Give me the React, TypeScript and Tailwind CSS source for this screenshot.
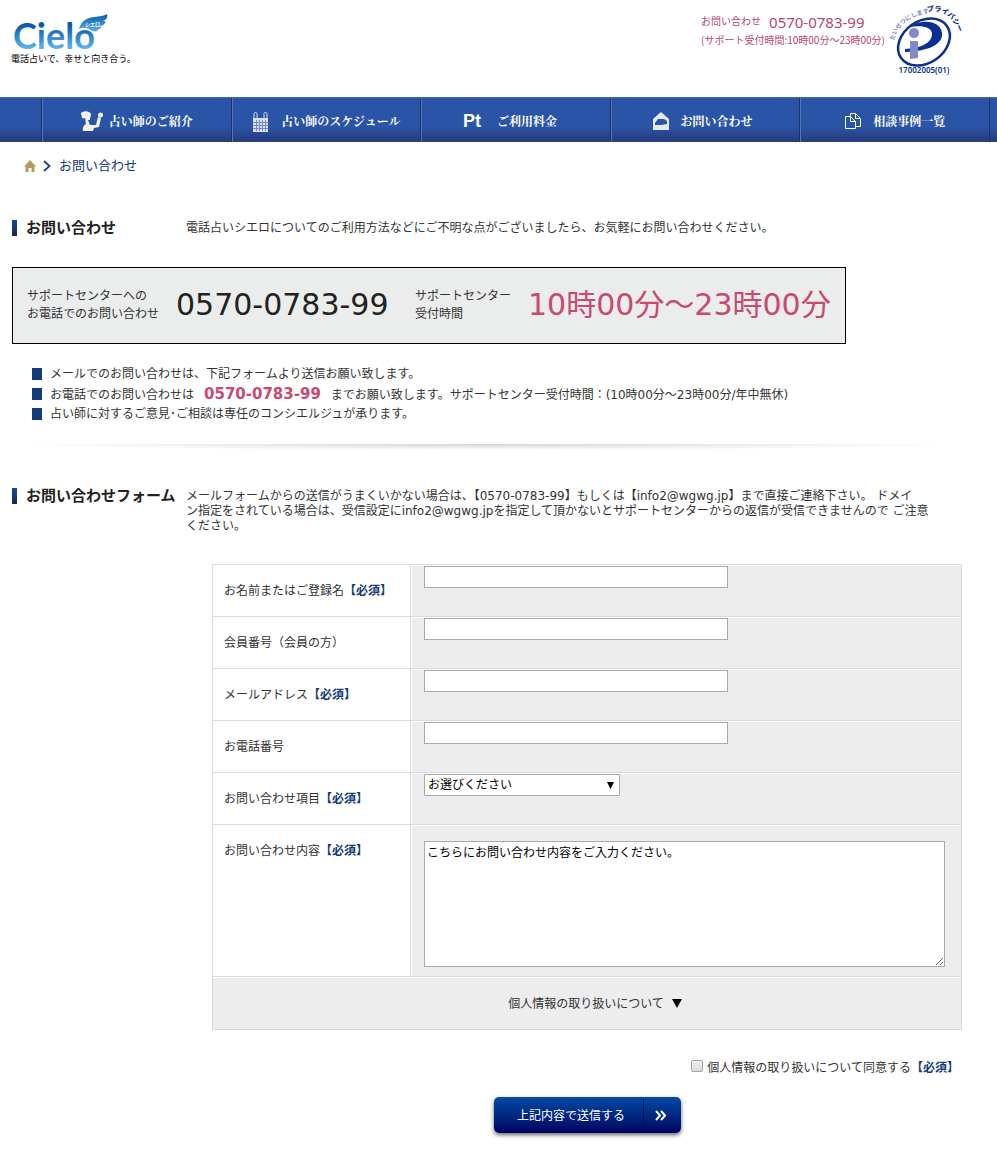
import React from 'react';

const navItems = [
  { label: '占い師のご紹介', icon: <PersonIcon />, gap: 'gap-1.5' },
  { label: '占い師のスケジュール', icon: <ScheduleIcon />, gap: 'gap-3' },
  { label: 'ご利用料金', icon: <PointIcon />, gap: 'gap-4 pr-3' },
  { label: 'お問い合わせ', icon: <MailIcon />, gap: 'gap-3 pr-1.5' },
  { label: '相談事例一覧', icon: <CasesIcon />, gap: 'gap-3' },
];

const textFields = [
  { id: 'name', label: 'お名前またはご登録名', type: 'text', required: true },
  { id: 'member', label: '会員番号（会員の方）', type: 'text', required: false },
  { id: 'email', label: 'メールアドレス', type: 'email', required: true },
  { id: 'tel', label: 'お電話番号', type: 'tel', required: false },
];

export default function App() {
  return (
    <div className="bg-white pb-4 font-['DejaVu_Sans','Noto_Sans_CJK_JP',sans-serif] text-xs text-[#333]">
      <Header />
      <GlobalNav />
      <main className="max-w-[962px] pl-3">
        <Breadcrumb />
        <ContactInfo />
        <ContactForm />
      </main>
    </div>
  );
}

function Header() {
  return (
    <header className="flex h-[97px] max-w-[962px] items-start justify-between pl-[11px]">
      <a href="#" className="block pt-2">
        <Logo />
        <p className="text-[9px] leading-3 text-black">電話占いで、幸せと向き合う。</p>
      </a>
      <div className="flex">
        <div className="pt-3 text-[10px] text-[#b8456b]">
          <p className="flex items-center gap-2 leading-5">
            <span>お問い合わせ</span>
            <span className="font-['Noto_Sans',sans-serif] text-[15px]">0570-0783-99</span>
          </p>
          <p className="font-['Noto_Sans_CJK_JP',sans-serif] leading-4">(サポート受付時間:10時00分〜23時00分)</p>
        </div>
        <PrivacyMark />
      </div>
    </header>
  );
}

function GlobalNav() {
  return (
    <nav className="h-[45px] border-t border-[#4768ab] bg-linear-to-b from-[#2a55a6] from-65% to-[#283f86] to-90% pr-[7px] pl-[41px]">
      <ul className="flex h-full border-r border-[#1c3364]">
        {navItems.map((item) => (
          <li key={item.label} className="flex-1 border-l border-[#1c3364]">
            <a
              href="#"
              className={`flex h-full items-center justify-center border-l border-[#5476b5] pt-0.5 font-['Noto_Serif_CJK_JP','Noto_Sans_CJK_JP',serif] font-bold whitespace-nowrap text-white ${item.gap}`}
            >
              {item.icon}
              {item.label}
            </a>
          </li>
        ))}
      </ul>
    </nav>
  );
}

function Breadcrumb() {
  return (
    <div className="flex h-12 items-center gap-1.5 pl-3">
      <a href="#" aria-label="ホーム">
        <svg width="12" height="12" viewBox="0 0 12 12">
          <path d="M6 0 12 6.5H10.5V12H7.5V8H4.5V12H1.5V6.5H0Z" fill="#b09d5e" />
        </svg>
      </a>
      <svg width="9" height="12" viewBox="0 0 9 12" fill="none" stroke="#1d3f94" strokeWidth="1.8">
        <path d="M2 1 7.5 6 2 11" />
      </svg>
      <span className="pl-0.5 text-[13px] text-[#143a78]">お問い合わせ</span>
    </div>
  );
}

function SectionHeading({ children }: { children: React.ReactNode }) {
  return (
    <h2 className="flex h-5 w-[174px] shrink-0 items-center gap-[9px] text-[15px] leading-5 font-bold whitespace-nowrap text-[#222]">
      <span className="h-4 w-[5px] shrink-0 bg-linear-to-b from-[#0a4ba5] to-[#1c2450]" />
      {children}
    </h2>
  );
}

function ContactInfo() {
  return (
    <section className="pt-7">
      <div className="flex items-center">
        <SectionHeading>お問い合わせ</SectionHeading>
        <p className="leading-5">
          電話占いシエロについてのご利用方法などにご不明な点がございましたら、お気軽にお問い合わせください。
        </p>
      </div>

      <div className="mt-[29px] flex h-[77px] max-w-[834px] items-center border border-black bg-[#ebedec] pb-0.5 pl-3.5 whitespace-nowrap">
        <p className="w-[149px] leading-[18px]">
          サポートセンターへの
          <br />
          お電話でのお問い合わせ
        </p>
        <p className="w-[239px] text-[30px] leading-10 text-[#222]">0570-0783-99</p>
        <p className="w-[113px] leading-[18px]">
          サポートセンター
          <br />
          受付時間
        </p>
        <p className="text-[30px] leading-10 text-[#c94a6f]">10時00分〜23時00分</p>
      </div>

      <ul className="mt-5 pl-5">
        <Bullet>メールでのお問い合わせは、下記フォームより送信お願い致します。</Bullet>
        <Bullet>
          お電話でのお問い合わせは
          <strong className="mx-2.5 text-[15px] text-[#c94a6f]">0570-0783-99</strong>
          までお願い致します。サポートセンター受付時間：(10時00分〜23時00分/年中無休)
        </Bullet>
        <Bullet>占い師に対するご意見･ご相談は専任のコンシエルジュが承ります。</Bullet>
      </ul>

      <div className="mt-5 h-1.5 bg-[radial-gradient(ellipse_50%_100%_at_50%_0%,#d4d4d4,#ffffff)]" />
    </section>
  );
}

function Bullet({ children }: { children: React.ReactNode }) {
  return (
    <li className="flex h-5 items-center gap-2 leading-5 whitespace-nowrap">
      <span className="h-3 w-2.5 bg-[#143a7b]" />
      <span>{children}</span>
    </li>
  );
}

function Required() {
  return <strong className="text-[#143a78]">【必須】</strong>;
}

function FormRow({ id, label, required, children }: { id: string; label: string; required: boolean; children: React.ReactNode }) {
  return (
    <div className="grid grid-cols-[198px_1fr] border-b border-[#dadada]">
      <label htmlFor={id} className="border-r border-[#dadada] pt-px pl-[11px] leading-[50px] whitespace-nowrap">
        {label}
        {required && <Required />}
      </label>
      <div className="mt-px ml-px bg-[#ededed] pl-3">{children}</div>
    </div>
  );
}

function ContactForm() {
  return (
    <section className="pt-9">
      <div className="flex items-start">
        <SectionHeading>お問い合わせフォーム</SectionHeading>
        <p className="pt-[3px] leading-[15px] whitespace-nowrap">
          メールフォームからの送信がうまくいかない場合は、【0570-0783-99】もしくは【info2@wgwg.jp】まで直接ご連絡下さい。 ドメイ
          <br />
          ン指定をされている場合は、受信設定にinfo2@wgwg.jpを指定して頂かないとサポートセンターからの返信が受信できませんので ご注意
          <br />
          ください。
        </p>
      </div>

      <form className="mt-[30px] ml-[200px]">
        <div className="border-x border-t border-[#dadada]">
          {textFields.map((field) => (
            <FormRow key={field.id} id={field.id} label={field.label} required={field.required}>
              <input
                id={field.id}
                type={field.type}
                className="block h-[22px] w-[304px] border border-[#a9a9a9] bg-white px-1"
              />
            </FormRow>
          ))}
          <FormRow id="topic" label="お問い合わせ項目" required>
            <div className="grid w-[196px] items-center">
              <select
                id="topic"
                className="col-start-1 row-start-1 h-[22px] appearance-none rounded-[1px] border border-[#a9a9a9] bg-white pl-[3px] text-black"
              >
                <option>お選びください</option>
              </select>
              <svg
                className="pointer-events-none col-start-1 row-start-1 mr-1.5 justify-self-end"
                width="7"
                height="7"
                viewBox="0 0 7 7"
              >
                <path d="M0 0H7L3.5 7Z" />
              </svg>
            </div>
          </FormRow>
          <FormRow id="message" label="お問い合わせ内容" required>
            <div className="pt-[15px] pr-4 pb-[9px]">
              <textarea
                id="message"
                defaultValue="こちらにお問い合わせ内容をご入力ください。"
                className="block h-[126px] w-full border border-[#a9a9a9] bg-white px-0.5 py-0.5 leading-[18px] text-black"
              />
            </div>
          </FormRow>
          <button
            type="button"
            className="mt-px flex h-[52px] w-full items-center justify-center gap-2 border-b border-[#dadada] bg-[#ededed] pl-4"
          >
            個人情報の取り扱いについて
            <svg width="10" height="9" viewBox="0 0 10 9">
              <path d="M0 0H10L5 9Z" />
            </svg>
          </button>
        </div>

        <div className="mt-7 flex items-center justify-end gap-1 pr-[3px] leading-5">
          <input
            id="agree"
            type="checkbox"
            className="mb-1 size-3 appearance-none rounded-[2px] border border-[#a5a5a5] bg-linear-to-b from-[#eeeeee] to-[#dcdcdc] checked:bg-[#143a78]"
          />
          <label htmlFor="agree">
            個人情報の取り扱いについて同意する
            <Required />
          </label>
        </div>

        <button
          type="submit"
          className="mx-auto mt-[19px] flex h-9 w-[187px] items-center rounded-[5px] bg-linear-to-b from-[#084aa3] to-[#02005f] text-white shadow-[0_2px_4px_rgba(0,0,0,0.6)]"
        >
          <span className="flex-1 pt-px pl-1.5">上記内容で送信する</span>
          <span className="flex h-8 w-[38px] items-center justify-center border-l border-[#02105a] pr-1">
            <svg width="11" height="11" viewBox="0 0 11 11" fill="none" stroke="#fff" strokeWidth="2">
              <path d="M1 1 5 5.5 1 10M6 1 10 5.5 6 10" />
            </svg>
          </span>
        </button>
      </form>
    </section>
  );
}

function Logo() {
  return (
    <svg className="-mb-1" width="98" height="49" viewBox="0 0 98 49" role="img" aria-label="Cielo">
      <defs>
        <linearGradient id="logoBlue" gradientUnits="userSpaceOnUse" x1="0" y1="10" x2="0" y2="41">
          <stop offset="0.25" stopColor="#0a5bad" />
          <stop offset="1" stopColor="#5fb6ee" />
        </linearGradient>
        <linearGradient id="wingBlue" x1="0" y1="0" x2="0" y2="1">
          <stop offset="0" stopColor="#0a58a8" />
          <stop offset="1" stopColor="#58b3ec" />
        </linearGradient>
      </defs>
      <text x="2" y="41" fontFamily="Lato" fontWeight="700" fontSize="36" fill="url(#logoBlue)">
        Cielo
      </text>
      <path
        d="M68 21C70 13 75 10 83 9C89 8 93 8 96 6C97 10 95 12 92 13C95 13 95 14 94 15C93 17 91 18 89 18C91 19 90 21 86 22C88 23 85 24 81 23C76 19 73 19 68 21Z"
        fill="url(#wingBlue)"
      />
      <text x="74" y="18" fontFamily="Noto Sans CJK JP" fontWeight="700" fontSize="5" fill="#fff">
        シエロ
      </text>
    </svg>
  );
}

function PrivacyMark() {
  return (
    <svg className="ml-[3px]" width="74" height="78" viewBox="0 0 74 78" role="img" aria-label="プライバシーマーク">
      <defs>
        <path id="markLeft" d="M6 41Q10 19 40 13" />
        <path id="markRight" d="M39 12Q62 7 71 34" />
      </defs>
      <g fontFamily="Noto Sans CJK JP">
        <text fontSize="6" fontWeight="700" fill="#7b86c4">
          <textPath href="#markLeft">たいせつにします</textPath>
        </text>
        <text fontSize="7" fontWeight="900" fill="#0c2f92">
          <textPath href="#markRight">プライバシー</textPath>
        </text>
      </g>
      <ellipse cx="36" cy="42" rx="28" ry="21" transform="rotate(-35 36 42)" fill="none" stroke="#0c2f92" strokeWidth="2.5" />
      <path
        d="M22 27C29 20 52 18 54 33C55 44 42 51 17 52V49C33 48 44 43 44 34C44 27 34 25 22 27Z"
        fill="#0c2f92"
      />
      <circle cx="26" cy="33" r="5.5" fill="#8189c6" stroke="#fff" />
      <path d="M22 41H30V58L22 59Z" fill="#8189c6" />
      <text x="36" y="73" textAnchor="middle" fontFamily="Noto Sans" fontSize="8" fontWeight="600" fill="#0c2f92">
        17002005(01)
      </text>
    </svg>
  );
}

function PersonIcon() {
  return (
    <svg width="22" height="20" viewBox="0 0 22 20" fill="#f3f3f6">
      <path d="M0 2C2 0 8 -1 10 3C10 5 9 6 9 9H7L9 14L15 14L17 6L20 7L18 16L13 17L12 20H2C1 17 3 14 5 13C4 11 5 9 4 7C1 8 0 6 1 5C0 4 0 3 0 2Z" />
      <circle cx="19.5" cy="4" r="2.5" />
    </svg>
  );
}

function ScheduleIcon() {
  return (
    <svg width="17" height="21" viewBox="0 0 17 21" fill="none">
      <path d="M1 7H16V21H1Z" fill="#d9deea" />
      <path d="M2 7V2.5Q3.5 -.5 5 2.5V7M12 7V2.5Q13.5 -.5 15 2.5V7" stroke="#d9deea" />
      <path d="M1 11.5H16M1 14.5H16M1 17.5H16M4.5 9V20M7.5 9V20M10.5 9V20M13.5 9V20" stroke="#7189bd" />
    </svg>
  );
}

function PointIcon() {
  return <span className="font-['Liberation_Sans',sans-serif] text-lg leading-5">Pt</span>;
}

function MailIcon() {
  return (
    <svg width="16" height="18" viewBox="0 0 16 18">
      <path d="M8 0 16 7V18H0V7Z" fill="#e6e8ef" />
      <path d="M2 11 5 7H11L14 9V12L8 13L2 13Z" fill="#2a55a6" />
    </svg>
  );
}

function CasesIcon() {
  return (
    <svg width="16" height="17" viewBox="0 0 16 17" fill="none" stroke="#fff">
      <path d="M5.5 3.5H.5V15.5H10.5V8.5L5.5 3.5V8.5H10.5" />
      <path d="M5.5 3.5V.5H10.5L15.5 5.5V13.5H10.5M10.5 .5V5.5H15.5" />
    </svg>
  );
}
